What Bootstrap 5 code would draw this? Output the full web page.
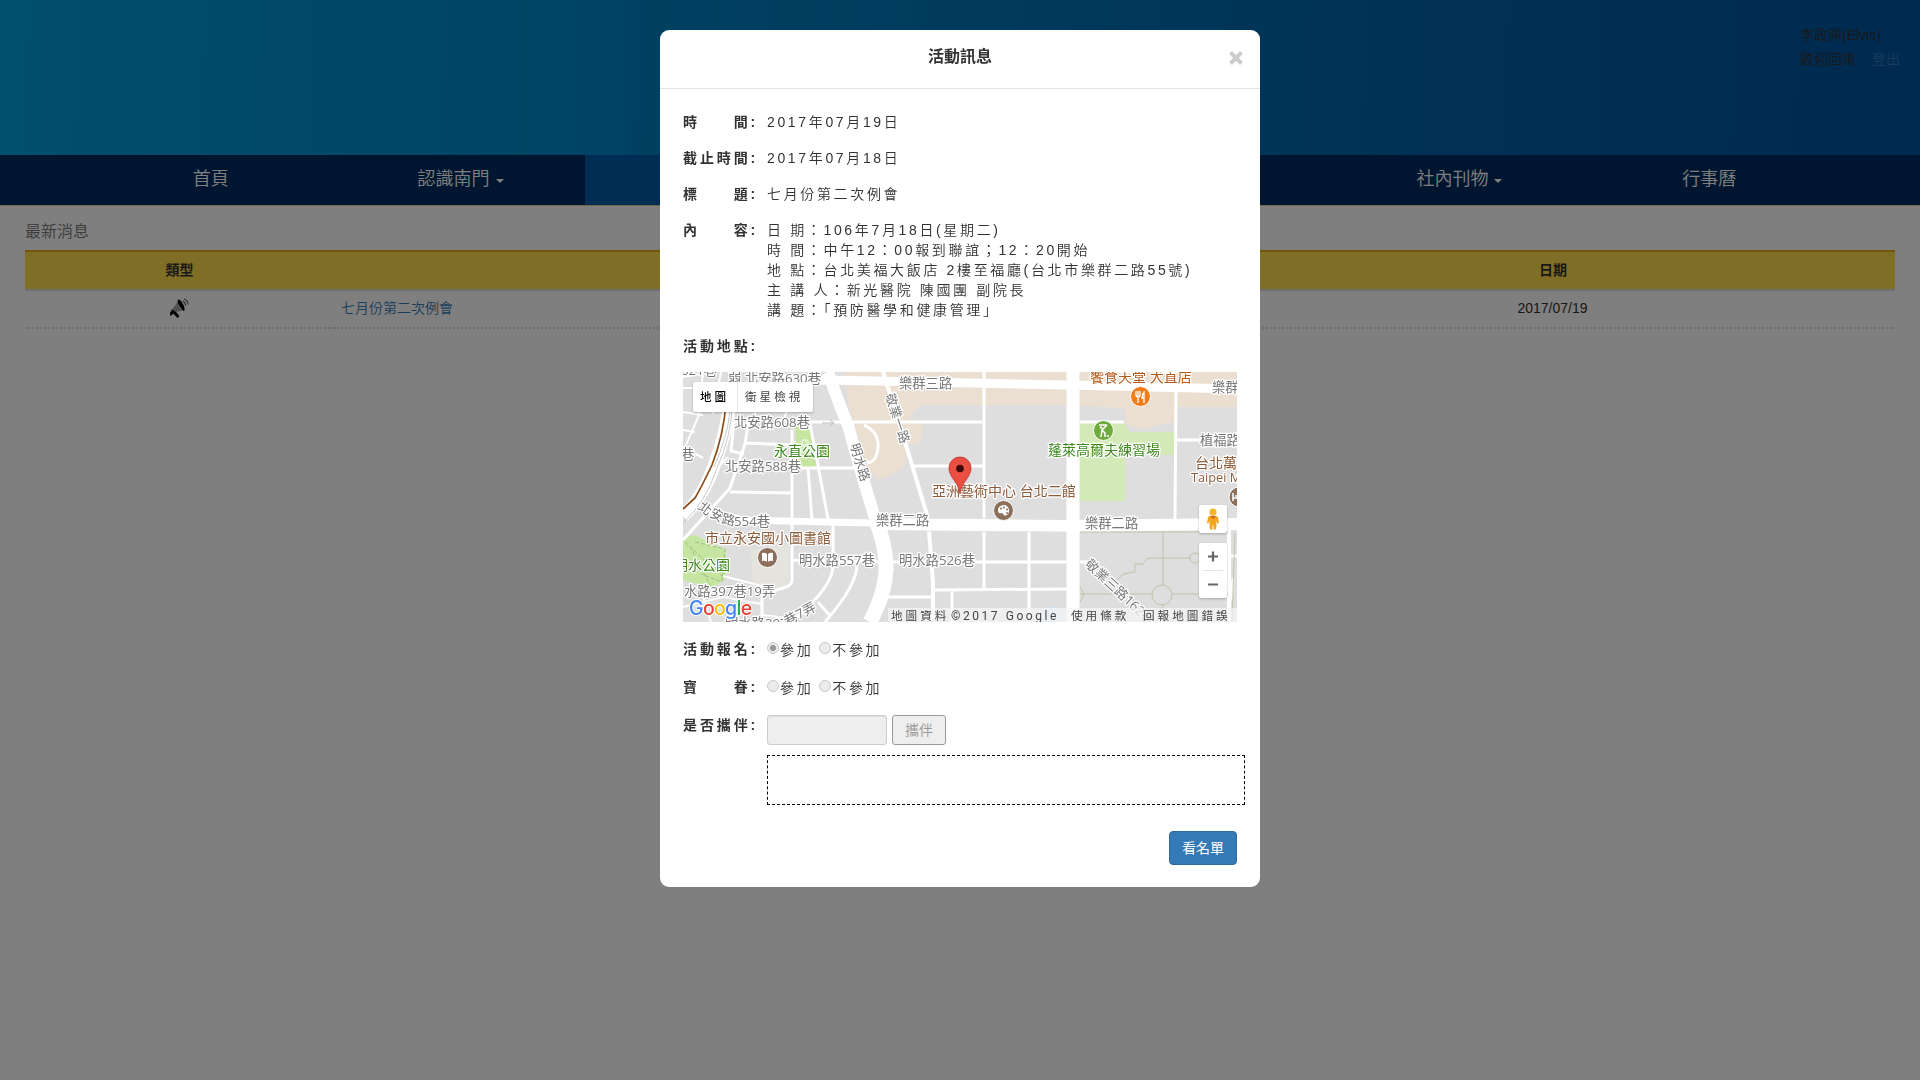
<!DOCTYPE html>
<html lang="zh-Hant">
<head>
<meta charset="utf-8">
<meta name="viewport" content="width=device-width, initial-scale=1">
<title>最新消息</title>
<link href="https://cdn.jsdelivr.net/npm/bootstrap@5.3.0/dist/css/bootstrap.min.css" rel="stylesheet">
<style>
body{font:350 14px/20px "Liberation Sans","Noto Sans CJK TC",sans-serif;color:#333;background:#fff;overflow:hidden}
a{color:#337ab7}
.site-head{height:155px;background:linear-gradient(92deg,#00a0dc 0%,#009cd8 3%,#007cc0 42%,#0060a8 78%,#0054a0 100%)}
.user-box{width:120px;padding-top:23px;line-height:24px}
.user-box a{margin-left:12px}
.site-nav{height:51px;background:#002c60;border-bottom:1px solid #e0d090;padding:0 86px 0 86px}
.site-nav .nav-link{color:#fff;font-size:18px;line-height:26px;padding:11px 0 12px;height:50px}
.site-nav .nav-link.active{background:#005aa8}
.site-nav .dropdown-toggle::after{border-width:4px 4px 0;vertical-align:2px;margin-left:6px}
.page{padding:16px 25px 0}
.page h1{font-size:16px;font-weight:350;line-height:20px;color:#777;margin:0 0 8px;height:20px}
.news{table-layout:fixed;line-height:20px;margin:0;border-collapse:collapse;color:#333}
.news th{background:#ffdc4c;border-top:2px solid #e2ae10;border-bottom:2px solid #ddd;text-align:center;color:#333;padding:7px 8px 9px;height:39px}
.news td{border-bottom:2px dotted #ddd;padding:7px 8px 8px 7px;height:38px;color:#333;background:#fff}
.news svg{display:block;margin:auto}
.modal-dialog.info{width:600px;max-width:600px;margin:30px auto}
.info .modal-content{border:0;border-radius:9px;height:857px;color:#333}
.info .modal-header{height:59px;border-color:#e5e5e5;padding:0 16px 4px;justify-content:center;position:relative}
.info .modal-title{font-size:16px;font-weight:700;line-height:22px}
.info .x-btn{position:absolute;right:16px;top:15px;border:0;background:none;padding:0;line-height:0}
.info .modal-body{padding:23px 23px 0;flex:none}
.line{display:flex;margin-bottom:16px;letter-spacing:2.65px;font-weight:330}
.line .tag{flex:0 0 84px;font-weight:700;letter-spacing:2.9px;white-space:nowrap}
.line .val{white-space:nowrap}
.map{display:block;margin:0 0 17px;width:554px;height:250px}
.map text{font-family:"Open Sans","Noto Sans CJK TC",sans-serif}
.halo{paint-order:stroke;stroke:#fff;stroke-width:2.5px;stroke-linejoin:round;font-weight:400}
.map .ctl{font-family:Roboto,"Noto Sans CJK TC",sans-serif;letter-spacing:3px;font-size:11.6px;fill:#444;font-weight:400}
.opt{display:flex;align-items:center;gap:1px;line-height:24px;height:22px}
.opt i{display:inline-block;width:12px;height:12px;border:1px solid #c8c8c8;border-radius:50%;background:#ececec;margin-top:-5px}
.opt i.on{background:radial-gradient(circle,#999 0 2.7px,#ececec 3.5px)}
.opt i.second{margin-left:5px}
.guest-in{width:120px;height:30px;border-radius:3px;border:1px solid #ccc;background:#eee!important;box-shadow:inset 0 1px 1px rgba(0,0,0,.08);padding:0}
.guest-btn{width:54px;height:30px;margin-left:5px;font-size:14px;font-weight:350;line-height:20px;padding:4px 0;border-radius:3px;border:1px solid #999;background:#eee;color:#999}
.guest-list{width:478px;height:50px;border:1px dashed #000;margin:10px 0 0 84px}
.list-btn{width:68px;height:34px;padding:6px 0;font-size:14px;line-height:20px;background:#337ab7;border:1px solid #2e6da4;border-radius:4px;color:#fff;margin-top:26px}
</style>
</head>
<body>
<header class="site-head d-flex justify-content-end">
  <div class="user-box">李政興(Elvis)<br>歡迎回來 <a href="#" class="text-decoration-none">登出</a></div>
</header>
<nav class="site-nav nav nav-justified flex-nowrap">
  <a class="nav-item nav-link" href="#">首頁</a>
  <a class="nav-item nav-link dropdown-toggle" href="#">認識南門</a>
  <a class="nav-item nav-link active" href="#"></a>
  <a class="nav-item nav-link" href="#"></a>
  <a class="nav-item nav-link" href="#"></a>
  <a class="nav-item nav-link dropdown-toggle" href="#">社內刊物</a>
  <a class="nav-item nav-link" href="#">行事曆</a>
</nav>
<main class="page">
  <h1>最新消息</h1>
  <table class="table news">
    <colgroup><col style="width:309px"><col style="width:877px"><col></colgroup>
    <thead><tr><th>類型</th><th></th><th>日期</th></tr></thead>
    <tbody><tr>
      <td><svg width="20" height="20" viewBox="0 0 20 20"><path d="M8.500 3.500Q9 0 12 3Q16 8 15.500 12Q15 14 13 11.500Q9 7 8.500 3.500z" fill="#000"/><path d="M8.500 4Q9 9 14 12.500L6.500 14L10 18.500L8.500 20L4.500 15.500L1.500 18L1 15L3 11.500z" fill="#333" fill-opacity=".45"/><path d="M3 11.500L7 14L10.500 18L8.500 20L4.500 15.500L1.500 18L1 15z" fill="#000"/><path d="M13.500 3q3 1 3 4.500M15 1q4 1.500 4 5.500" fill="none" stroke="#666" stroke-width="1.200"/></svg></td>
      <td><a href="#" class="text-decoration-none">七月份第二次例會</a></td>
      <td class="text-center">2017/07/19</td>
    </tr></tbody>
  </table>
</main>

<div class="modal-backdrop show"></div>
<div class="modal d-block" tabindex="-1">
<div class="modal-dialog info"><div class="modal-content">
  <div class="modal-header">
    <h4 class="modal-title">活動訊息</h4>
    <button class="x-btn" aria-label="Close"><svg width="16" height="26" viewBox="0 0 16 26"><path d="M2.500 7.500l11 11m0-11l-11 11" stroke="#ccc" stroke-width="4"/></svg></button>
  </div>
  <div class="modal-body">
    <div class="line"><div class="tag">時　　間:</div><div class="val">2017年07月19日</div></div>
    <div class="line"><div class="tag">截止時間:</div><div class="val">2017年07月18日</div></div>
    <div class="line"><div class="tag">標　　題:</div><div class="val">七月份第二次例會</div></div>
    <div class="line"><div class="tag">內　　容:</div><div class="val">日 期：106年7月18日(星期二)<br>時 間：中午12：00報到聯誼；12：20開始<br>地 點：台北美福大飯店 2樓至福廳(台北市樂群二路55號)<br>主 講 人：新光醫院 陳國團 副院長<br>講 題：「預防醫學和健康管理」</div></div>
    <div class="line"><div class="tag">活動地點:</div></div>
    <svg class="map" viewBox="0 0 554 250">
      <rect width="554" height="250" fill="#dedede"/>
      <!-- commercial blocks, parks and grounds -->
      <path d="M160 0H383V33H237L226 45L240 53L237 72H226L221 95L208 103L195 108L184 96L180 76L168 45zM397 0H554V35H493L491 50L461 57L442 52V36L397 34z" fill="#ebdfd2"/>
      <path d="M397 51H441L447 60H491V83H442V129H397z" fill="#d3e9b7"/>
      <path d="M112 53L127 52L136 94L115 96z" fill="#c5e5a0"/>
      <path d="M0 165L12 163L43 178V206L30 216L0 208z" fill="#c5e5a0"/>
      <path d="M68 178L106 173V214L70 216z" fill="#e4e3dc"/>
      <path d="M360 237l10-3 13 6v10h-27z" fill="#cfe3f5"/>
      <path d="M2 170L40 205M28 215L8 176M12 170L42 177L39 210L18 202" fill="none" stroke="#9fbf83" stroke-dasharray="4 2"/>
      <!-- minor streets -->
      <g fill="none" stroke="#fff" stroke-width="3">
        <path d="M62 71L110 73M65 53L62 72L47 116L29 136L0 168M47 120L109 121M68 53Q55 49 51 50L48 79L61 82M109 58V208Q109 215 96 217L79 223V250M125 96L129 147M127 52L135 93L145 147M115 96H177M125 50H299M150 153V194Q150 214 112 247M174 190Q176 211 142 250M135 230L148 245M110 188L205 190M181 53Q196 60 195 75T184 91M230 94H300M209 190H384M252 218L384 217M203 225H250M269 219V250M346 160V250M301 0L301 216M493 18L492 147M397 50H441M494 68H554M397 190H410M545 184H554M550 206L548 229"/>
        <path d="M0 5L28 0M0 16H35M0 40L20 43M20 0L16 43L0 80M38 0L30 42M0 75L20 86M45 85L34 96L20 120M85 0L70 48M0 58L12 60M110 20L100 50M50 0L43 32M0 235L40 225L79 232M40 204L79 214M20 224L28 250M79 243L112 247" stroke-width="2"/>
      </g>
      <g fill="none" stroke="#fff">
        <path d="M90 0Q98 11 145 8L384 13L554 17" stroke-width="9"/>
        <path d="M200 0Q210 30 219 60L245 146L250 210V250" stroke-width="4"/>
        <path d="M145 0Q157 35 165 53Q176 95 192 146" stroke-width="12"/>
        <path d="M192 146C207 183 208 211 187 250" stroke-width="15"/>
        <path d="M26 139L60 148L189 151" stroke-width="7"/>
        <path d="M189 152L384 154L554 152" stroke-width="12"/>
        <path d="M390 0V250" stroke-width="13"/>
        <path d="M546 155V250" stroke-width="4"/>
        <path d="M48 25Q43 63 31 94Q20 126 0 144" stroke-width="13"/>
      </g>
      <path d="M240 146L383 147M220 159L383 160" stroke="#e4e1d8" fill="none"/>
      <path d="M50 28Q48 66 34 96Q23 130 0 151M47 40Q44 66 31 95" fill="none" stroke="#c9c9c9"/>
      <path d="M43 30Q41 62 29 93Q18 116 12 126L0 137" fill="none" stroke="#8a4b16" stroke-width="1.700"/>
      <path d="M139 51h12m-4-3l4 3-4 3" fill="none" stroke="#bbb"/>
      <!-- paths of the park -->
      <g fill="none" stroke="#c4c1a9"><path d="M397 160H545M480 160V213M480 233V250M397 222H469M489 222H545M432 210L440 202L452 200V192H460L465 186H507M552 161L549 250"/><circle cx="479" cy="223" r="10"/><circle cx="512" cy="186" r="5"/><path d="M397 215l4 7-4 8"/></g>
      <!-- street names -->
      <g class="halo" font-size="13.300" fill="#777">
        <text x="-2" y="3">621巷</text><text x="45" y="10">弱</text><text x="62" y="11">北安路630巷</text>
        <text x="51" y="55">北安路608巷</text><text x="42" y="99">北安路588巷</text><text x="-2" y="87">巷</text>
        <text transform="translate(14 136) rotate(38)">北</text><text transform="translate(26 144) rotate(28)">安</text><text transform="translate(38 151) rotate(12)">路</text><text x="51" y="154">554巷</text>
        <text x="116" y="193">明水路557巷</text><text x="216" y="193">明水路526巷</text>
        <text x="1" y="224">水路397巷19弄</text><text x="42" y="256">明水路397</text><text transform="translate(104 254) rotate(-28)">巷7弄</text>
        <text x="216" y="16">樂群三路</text><text x="193" y="153">樂群二路</text><text x="402" y="156">樂群二路</text><text x="529" y="20">樂群三路</text><text x="517" y="73">植福路</text>
        <text transform="translate(202 23) rotate(72)" font-size="13">敬業一路</text><text transform="translate(167 73) rotate(73)" font-size="13">明水路</text>
        <text transform="translate(401 193) rotate(43)">敬業三路162巷</text>
      </g>
      <!-- places -->
      <g class="halo" font-size="14" fill="#8b5b3a">
        <text x="22" y="171">市立永安國小圖書館</text><text x="249" y="124">亞洲藝術中心 台北二館</text><text x="407" y="10" fill="#b55b17">饗食天堂 大直店</text><text x="512" y="96">台北萬豪</text><text x="508" y="110" font-size="12.700">Taipei Marriott</text>
        <g fill="#3e8a1e"><text x="91" y="84">永直公園</text><text x="-9" y="198">明水公園</text><text x="365" y="83">蓬萊高爾夫練習場</text></g>
      </g>
      <circle cx="122" cy="71" r="3" fill="none" stroke="#e6f5d8" stroke-width="2"/>
      <g stroke="#fff"><circle cx="84.500" cy="185.500" r="10" fill="#8d705c"/><circle cx="320.500" cy="138.500" r="10" fill="#8d705c"/><circle cx="457.500" cy="24.500" r="10" fill="#ef7d1a"/><circle cx="420.500" cy="58.500" r="10" fill="#6dab3c"/><circle cx="556" cy="125" r="10" fill="#8d705c"/></g>
      <path d="M79 181q3-1 5 1v8q-2-2-5-1zm11 0q-3-1-5 1v8q2-2 5-1z" fill="#fff"/>
      <path d="M315 139a5.500 5.500 0 1 1 8 4.500q-2 .5-2.500-1t-2-1.500q-3 1-3.500-2z" fill="#fff"/><g fill="#8d705c"><circle cx="318" cy="136.500" r="1"/><circle cx="321" cy="135.500" r="1"/><circle cx="324" cy="137.500" r="1"/><circle cx="324" cy="141" r="1"/></g>
      <path d="M453 19v4q0 2 2 2v6m2-12v4q0 2-2 2m0-6v6M461 31V20q-2 2-2 6h2" fill="none" stroke="#fff" stroke-width="1.300"/>
      <path d="M416 53h8M424 53l-5 5 3 3v4M419 58l-1 7" fill="none" stroke="#fff" stroke-width="1.600"/><circle cx="418" cy="55.500" r="1.300" fill="#fff"/><circle cx="425" cy="64" r="1" fill="#fff"/>
      <path d="M550 121v8m0-3h6m-4-2h4" stroke="#fff" stroke-width="1.500" fill="none"/>
      <!-- marker -->
      <path d="M277 122C276 110 266 106 266 96a11 11 0 0 1 22 0C288 106 278 110 277 122z" fill="#ea4335" fill-opacity=".93" stroke="#b6332a" stroke-width=".8"/><circle cx="277" cy="96.500" r="3.800" fill="#400b0b"/>
      <!-- controls -->
      <g filter="drop-shadow(0 1px 1px rgba(0,0,0,.25))" fill="#fff"><rect x="10" y="10" width="120" height="30" rx="2"/><rect x="516" y="133" width="28" height="28" rx="2"/><rect x="516" y="171" width="28" height="55" rx="2"/></g>
      <path d="M54.500 10v30M520 198.500h20" stroke="#e6e6e6"/>
      <text class="ctl" x="17" y="29" style="fill:#000;font-weight:500">地圖</text><text class="ctl" x="62" y="29">衛星檢視</text>
      <path d="M525 184.500h10m-5-5v10M525 212.500h10" stroke="#666" stroke-width="2.200"/>
      <path d="M527 144q3-1 6 0l2 1 1 6-1.500.5-1-3v4l-.5 5h-2.500v-4h-1v4h-2.500l-.5-5v-4l-1 3-1.500-.5 1-6z" fill="#f2a51d"/><circle cx="530" cy="140" r="3.600" fill="#f5b52b"/><path d="M527 144l3 3 3-3z" fill="#c9631a"/>
      <rect x="205" y="236" width="349" height="14" fill="#f5f5f5" fill-opacity=".72"/>
      <text class="ctl" x="208" y="247.500">地圖資料</text><text class="ctl" x="268" y="247.500" style="font-size:12px;letter-spacing:2.550px">©2017 Google</text><text class="ctl" x="388" y="247.500">使用條款</text><text class="ctl" x="460" y="247.500">回報地圖錯誤</text>
      <text x="6" y="243" font-size="19.500" font-weight="500" style="font-family:Inter,sans-serif;letter-spacing:-.7px" stroke="#fff" stroke-width="2" paint-order="stroke"><tspan fill="#4285f4">G</tspan><tspan fill="#ea4335">o</tspan><tspan fill="#fbbc05">o</tspan><tspan fill="#4285f4">g</tspan><tspan fill="#34a853">l</tspan><tspan fill="#ea4335">e</tspan></text>
    </svg>
    <div class="line"><div class="tag">活動報名:</div><div class="opt"><i class="on"></i><span>參加</span><i class="second"></i><span>不參加</span></div></div>
    <div class="line"><div class="tag">寶　　眷:</div><div class="opt"><i></i><span>參加</span><i class="second"></i><span>不參加</span></div></div>
    <div class="line mb-0"><div class="tag">是否攜伴:</div><input class="form-control guest-in" disabled><button class="guest-btn" disabled>攜伴</button></div>
    <div class="guest-list"></div>
    <div class="d-flex justify-content-end"><button class="list-btn">看名單</button></div>
  </div>
</div></div>
</div>
<script src="https://cdn.jsdelivr.net/npm/bootstrap@5.3.0/dist/js/bootstrap.bundle.min.js"></script>
</body>
</html>
